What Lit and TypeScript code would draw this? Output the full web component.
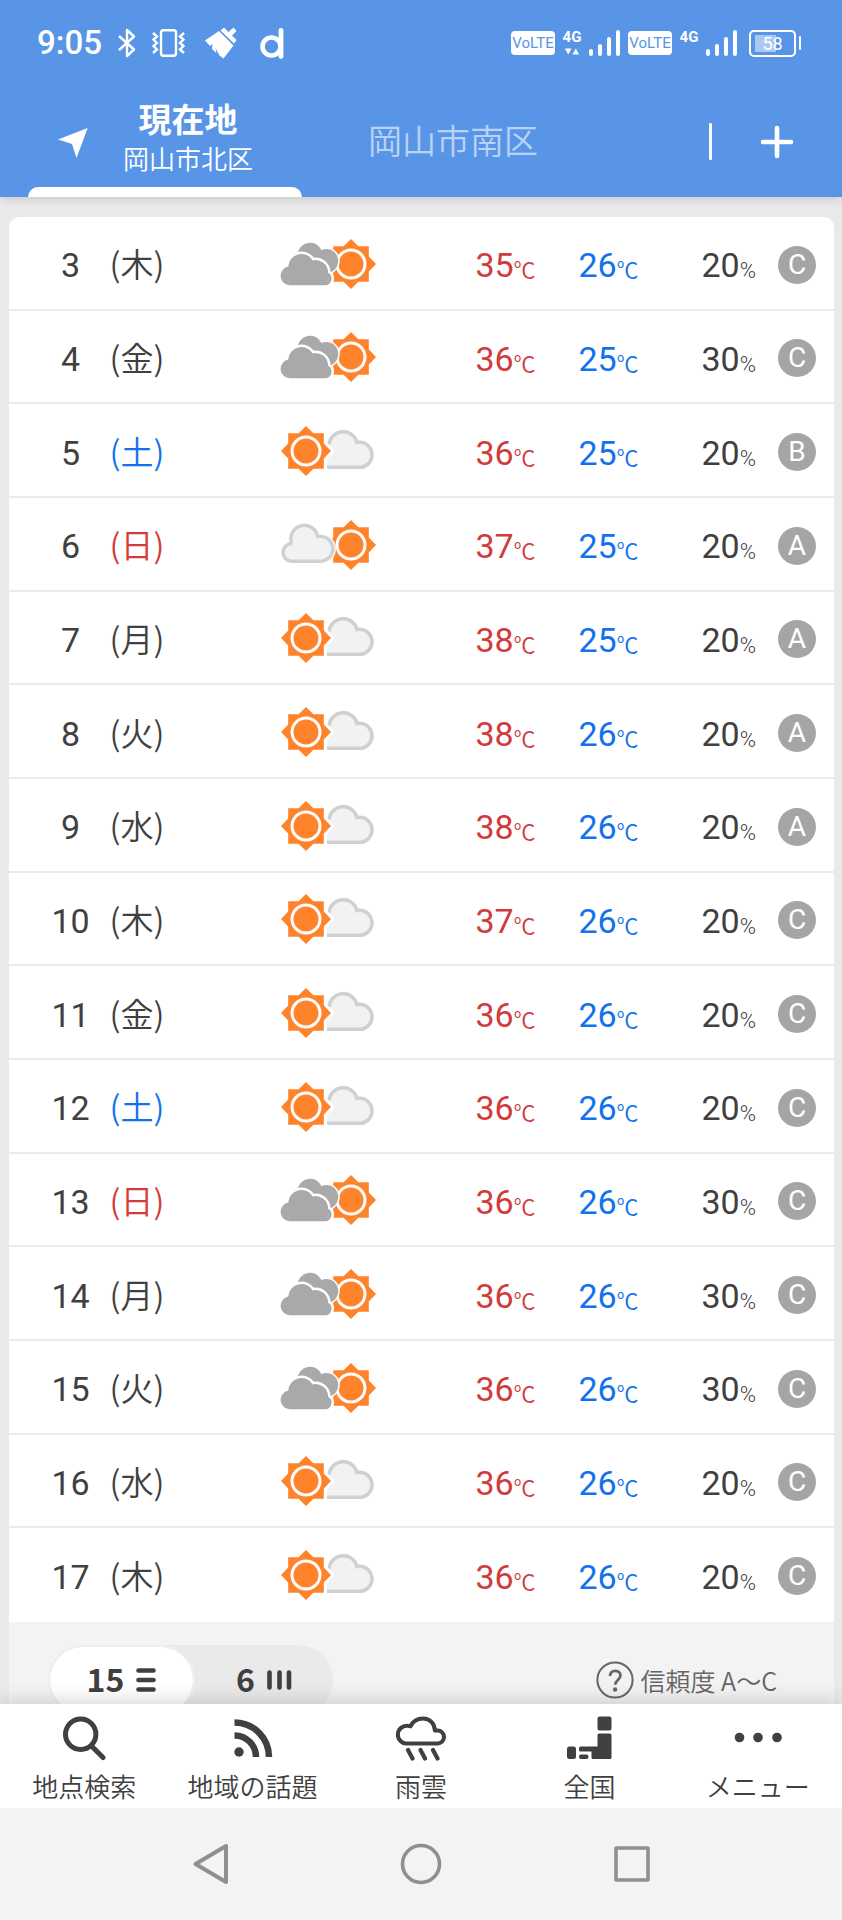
import { LitElement, html, css, svg, nothing } from "lit";
import { customElement, property, state } from "lit/decorators.js";

type Sky = "cloud-sun" | "sun-cloud" | "haze-sun";
type Day = [number, string, Sky, number, number, number, string];

const DAYS: Day[] = [
  [3, "木", "cloud-sun", 35, 26, 20, "C"],
  [4, "金", "cloud-sun", 36, 25, 30, "C"],
  [5, "土", "sun-cloud", 36, 25, 20, "B"],
  [6, "日", "haze-sun", 37, 25, 20, "A"],
  [7, "月", "sun-cloud", 38, 25, 20, "A"],
  [8, "火", "sun-cloud", 38, 26, 20, "A"],
  [9, "水", "sun-cloud", 38, 26, 20, "A"],
  [10, "木", "sun-cloud", 37, 26, 20, "C"],
  [11, "金", "sun-cloud", 36, 26, 20, "C"],
  [12, "土", "sun-cloud", 36, 26, 20, "C"],
  [13, "日", "cloud-sun", 36, 26, 30, "C"],
  [14, "月", "cloud-sun", 36, 26, 30, "C"],
  [15, "火", "cloud-sun", 36, 26, 30, "C"],
  [16, "水", "sun-cloud", 36, 26, 20, "C"],
  [17, "木", "sun-cloud", 36, 26, 20, "C"],
];

const SKY_NAMES: Record<Sky, string> = {
  "cloud-sun": "曇のち晴",
  "sun-cloud": "晴時々曇",
  "haze-sun": "薄曇のち晴",
};

@customElement("weather-icon")
export class WeatherIcon extends LitElement {
  @property() sky: Sky = "sun-cloud";

  static styles = css`
    :host { display: inline-block; }
    svg { display: block; }
    .halo { fill: #fff; stroke: #fff; stroke-width: 6; stroke-linejoin: round; }
    .sun { fill: #ff832b; }
    .ring { fill: none; stroke: #fff; stroke-width: 3; }
    .cloud { fill: #f2f2f2; stroke: #d0d0d0; stroke-width: 3.4; stroke-linejoin: round; }
    .grey { fill: #a9a9a9; }
    .edge { fill: #fff; stroke: #fff; stroke-width: 5; }
    .rim { fill: none; stroke: #fff; stroke-width: 6; }
  `;

  private sun(x: number, halo: boolean) {
    const shape = "M0-25 7.4-17.8H17.8V-7.4L25 0 17.8 7.4V17.8H7.4L0 25-7.4 17.8H-17.8V7.4L-25 0-17.8-7.4V-17.8H-7.4Z";
    return svg`<g transform="translate(${x} 25)">
      ${halo ? svg`<path class="halo" d=${shape}/>` : nothing}
      <path class="sun" d=${shape}/>
      <circle class="ring" r="14"/>
    </g>`;
  }

  render() {
    const front = "M10 46.3a9.5 9.5 0 0 1-1.8-18.8 13.3 13.3 0 0 1 24.6-6.1 12.5 12.5 0 0 1 15.3 12.4 6.7 6.7 0 0 1-3 12.5Z";
    const back = "M17.5 16a12.6 12.6 0 0 1 24-5A11.5 11.5 0 0 1 51 33H30Z";
    const haze = "M11 41.2H40.5a12.4 12.4 0 0 0 0-24.8q-1.5 0-2.8.3A13.5 13.5 0 0 0 11 21v2.5A8.9 8.9 0 0 0 11 41.2Z";
    return html`<svg width="96" height="50" viewBox="0 0 96 50" role="img" aria-label=${SKY_NAMES[this.sky]}>
      ${this.sky === "sun-cloud"
        ? svg`<path d="M47 41.3H79.5a12.5 12.5 0 0 0 0-25q-1.2 0-2.5.3A14.2 14.2 0 0 0 49.8 17.5L47 24Z" fill="#f2f2f2"/>
            <path d="M47 41.3H79.5a12.5 12.5 0 0 0 0-25q-1.2 0-2.5.3A14.2 14.2 0 0 0 49 19" fill="none" stroke="#d0d0d0" stroke-width="3.6"/>
            ${this.sun(26, true)}`
        : nothing}
      ${this.sky === "haze-sun"
        ? svg`${this.sun(71, false)}<path class="rim" d=${haze}/><path class="cloud" d=${haze}/>`
        : nothing}
      ${this.sky === "cloud-sun"
        ? svg`${this.sun(71, false)}
            <path d=${back} fill="#fff" stroke="#fff" stroke-width="3"/>
            <path class="grey" d=${back}/>
            <path class="edge" d=${front}/><path class="grey" d=${front}/>`
        : nothing}
    </svg>`;
  }
}

@customElement("status-bar")
export class StatusBar extends LitElement {
  static styles = css`
    :host {
      display: flex; align-items: center; justify-content: space-between;
      height: 86px; padding: 0 41px 0 37px; color: #fff;
      font-family: Roboto, "Noto Sans CJK JP", sans-serif;
    }
    svg { display: block; flex: none; }
    .side { display: flex; align-items: center; }
    .time { font-size: 33px; line-height: 40px; font-weight: 500; margin-right: 16px; }
    .notices { display: flex; align-items: center; gap: 16px; }
    .apps { display: flex; align-items: center; gap: 23px; margin-left: 4px; }
    .volte {
      width: 44px; height: 24px; border-radius: 4px; background: #fff; color: #5995e6;
      font-size: 15px; line-height: 25px; text-align: center;
    }
    .net {
      display: flex; flex-direction: column; align-items: center; gap: 3px;
      width: 18px; height: 26px; margin: 0 8px;
      font-size: 15px; line-height: 15px; font-weight: 700;
    }
    .bars { margin-right: 7px; }
    .battery {
      box-sizing: border-box; width: 47px; height: 27px; margin-left: 4px;
      border: 2px solid #fff; border-radius: 5px;
      font-size: 18px; line-height: 23px; text-align: center;
      background: linear-gradient(#a9c9f3, #a9c9f3) 4px 3px / 21px 17px no-repeat;
    }
    .nub { width: 2px; height: 14px; margin-left: 3px; background: #fff; border-radius: 1px; }
  `;

  private bars() {
    return html`<svg class="bars" width="32" height="26" viewBox="0 0 32 26" stroke="#fff" stroke-width="4" stroke-linecap="round">
      <path d="M2 21v3M11 16v8M20 9v15M29 2v22"/></svg>`;
  }

  render() {
    return html`
      <div class="side">
        <span class="time">9:05</span>
        <div class="notices">
          <svg width="18" height="30" viewBox="0 0 18 30" fill="none" stroke="#fff" stroke-width="2.4" stroke-linejoin="round">
            <path d="M1 8 16 21.5 9 28V2l7 6.5L1 22"/></svg>
          <svg width="33" height="28" viewBox="0 0 33 28" fill="none" stroke="#fff" stroke-width="2.4">
            <rect x="9" y="1.2" width="15" height="25.5" rx="2.5"/>
            <path d="m1 4 4 3.500-3.500 3 3.500 3.500-3.500 3L5 20.500 1 24M32 4l-4 3.500 3.500 3L28 14l3.500 3-3.500 3.500 4 3.500"/></svg>
          <div class="apps">
            <svg width="32" height="32" viewBox="0 0 32 32" fill="#fff">
              <path d="M15.500 3.500 19 .5 23.500 5 28.500.5 31.500 4 27 8.500 31.500 13 29 16.500Z"/>
              <path d="M14 4 28.500 18.500 18.500 31.500 14.500 28.500 10.500 21l1 5-4.500-4 .5-5-2.500 2L0 13.500Z"/></svg>
            <svg width="24" height="31" viewBox="0 0 24 31" fill="none" stroke="#fff">
              <circle cx="11.500" cy="18.500" r="9" stroke-width="4.600"/>
              <path d="M21 2.500V28.500" stroke-width="4.800" stroke-linecap="round"/></svg>
          </div>
        </div>
      </div>
      <div class="side">
        <span class="volte">VoLTE</span>
        <span class="net">4G<svg width="14" height="7" viewBox="0 0 14 7" fill="#fff"><path d="M0 .5h6.500L3.200 6.500ZM7.500 6.500H14L10.800.5Z"/></svg></span>
        ${this.bars()}
        <span class="volte">VoLTE</span>
        <span class="net">4G</span>
        ${this.bars()}
        <span class="battery">58</span><span class="nub"></span>
      </div>`;
  }
}

@customElement("app-root")
export class AppRoot extends LitElement {
  @state() private rows = 15;
  @state() private place = 0;

  static styles = css`
    :host {
      display: flex; flex-direction: column; height: 100vh; min-width: 0;
      background: #eaeaea; color: #404040;
      font-family: Roboto, "Noto Sans CJK JP", sans-serif;
    }
    button {
      margin: 0; padding: 0; border: 0; background: none; color: inherit;
      font: inherit; cursor: pointer;
    }
    svg { display: block; flex: none; }

    .header { flex: none; background: #5995e6; color: #fff; box-shadow: 0 1px 10px rgba(0, 0, 0, .18); }
    .tabs { display: flex; height: 111px; padding: 0 46px 0 28px; }
    .places { display: flex; flex: 1; gap: 14px; }
    .place {
      display: grid; align-content: center; justify-items: center; width: 274px;
      font-size: 34px; line-height: 40px; font-weight: 350; color: #b9d3f6;
    }
    .here {
      grid-template-columns: 30px 1fr 14px; gap: 0 15px; padding-left: 30px; box-sizing: border-box;
      color: #fff; grid-template-rows: 1fr 10px; align-content: stretch;
    }
    .here svg { align-self: center; padding-top: 12px; }
    .names { display: flex; flex-direction: column; align-items: center; justify-content: center; padding-top: 5px; }
    .name { font-size: 33px; line-height: 42px; font-weight: 700; }
    .ward { font-size: 26px; line-height: 36px; font-weight: 350; }
    .mark { grid-column: 1 / -1; justify-self: stretch; margin-left: -30px; background: #fff; border-radius: 10px 10px 0 0; }
    .tools { display: flex; align-items: center; gap: 46px; }
    .rule { width: 3px; height: 37px; background: #fff; border-radius: 1px; }

    .main { flex: 1; min-height: 0; display: flex; flex-direction: column; padding: 20px 8px 0 9px; overflow: hidden; }
    .forecast {
      flex: 1; width: 100%; table-layout: fixed; border-collapse: separate; border-spacing: 0;
      background: #fff; border-radius: 10px 10px 0 0;
      font-size: 34px; line-height: 40px; text-align: center; white-space: nowrap;
    }
    .forecast td { padding: 5px 0 0; border-bottom: 2px solid #eaeaea; }
    .forecast tr:last-child td { border-bottom-color: #fff; }
    .c-date { width: 93px; }
    .c-week { width: 70px; }
    .c-temp { width: 103px; }
    .c-rain { width: 100px; }
    .c-rank { width: 74px; }
    .forecast .date { padding-left: 30px; }
    .forecast .week { padding-top: 1px; font-size: 33px; font-weight: 350; font-family: "Noto Sans CJK JP", sans-serif; }
    .forecast .sky { padding: 2px 0 0 30px; }
    .forecast .rain { padding-right: 4px; text-align: right; }
    .forecast .rank { padding: 0; }
    .sky weather-icon { vertical-align: middle; }
    .sat { color: #1271ee; }
    .sun { color: #d13b3b; }
    .high { color: #d13b3b; }
    .low { color: #1271ee; }
    .unit { font-size: 22px; line-height: 22px; font-weight: 350; vertical-align: -1px; }
    .badge {
      display: inline-block; width: 38px; height: 38px; border-radius: 50%; vertical-align: middle;
      background: #a5a5a5; color: #fff; font-size: 28px; line-height: 38px;
    }

    .strip {
      flex: none; display: flex; justify-content: space-between; align-items: flex-start;
      height: 59px; padding: 23px 57px 0 39px; background: #f3f3f3;
    }
    .switch { display: flex; height: 70px; border-radius: 35px; background: #eaeaea; }
    .option {
      display: flex; align-items: center; justify-content: center; gap: 12px;
      width: 138px; height: 70px; border-radius: 35px;
      font-family: "Noto Sans CJK JP", sans-serif; font-size: 32px; font-weight: 700; line-height: 36px;
    }
    .count { padding-bottom: 4px; }
    .option[aria-pressed="true"] { width: 147px; background: #fff; box-shadow: inset 0 0 0 2px #ededed; }
    .help {
      display: flex; align-items: center; gap: 7px; height: 70px; color: #666;
      font-family: "Noto Sans CJK JP", sans-serif; font-size: 25px; line-height: 36px; font-weight: 350;
    }

    .menu {
      flex: none; position: relative; display: grid; grid-template-columns: repeat(5, 1fr);
      height: 104px; background: #fff; box-shadow: 0 -2px 20px rgba(0, 0, 0, .18);
    }
    .entry {
      display: flex; flex-direction: column; align-items: center; gap: 7px; padding-top: 11px;
      font-size: 26px; line-height: 36px; font-weight: 350; color: #404040; text-decoration: none;
      font-family: "Noto Sans CJK JP", sans-serif;
    }
    .system { flex: none; position: relative; display: flex; height: 112px; padding: 0 12.5%; background: #f3f3f3; }
    .key { flex: 1; display: flex; align-items: center; justify-content: center; }
  `;

  private row([date, week, sky, high, low, rain, rank]: Day) {
    const tone = week === "土" ? "sat" : week === "日" ? "sun" : "";
    return html`<tr>
      <td class="date">${date}</td>
      <td class="week ${tone}">(${week})</td>
      <td class="sky"><weather-icon .sky=${sky}></weather-icon></td>
      <td class="high">${high}<span class="unit">℃</span></td>
      <td class="low">${low}<span class="unit">℃</span></td>
      <td class="rain">${rain}<span class="unit">%</span></td>
      <td class="rank"><span class="badge">${rank}</span></td>
    </tr>`;
  }

  private entry(label: string, icon: unknown) {
    return html`<a class="entry" href="#">
      <svg width="52" height="46" viewBox="0 0 52 46" fill="none" stroke="#404040" aria-hidden="true">${icon}</svg>${label}
    </a>`;
  }

  render() {
    return html`
      <header class="header">
        <status-bar></status-bar>
        <div class="tabs">
          <div class="places">
            <button class="place here" @click=${() => (this.place = 0)}>
              <svg width="30" height="30" viewBox="0 0 30 30" fill="#fff"><path d="M29.700 0 18.500 30 14 16 0 11.500Z"/></svg>
              <span class="names"><span class="name">現在地</span><span class="ward">岡山市北区</span></span>
              <span></span>
              <span class="mark"></span>
            </button>
            <button class="place" @click=${() => (this.place = 1)}>岡山市南区</button>
          </div>
          <div class="tools">
            <span class="rule"></span>
            <button aria-label="追加">
              <svg width="38" height="38" viewBox="0 0 38 38" stroke="#fff" stroke-width="4.600" stroke-linecap="round"><path d="M19 5v28M5 19h28"/></svg>
            </button>
          </div>
        </div>
      </header>

      <main class="main">
        <table class="forecast">
          <colgroup>
            <col class="c-date"><col class="c-week"><col><col class="c-temp"><col class="c-temp"><col class="c-rain"><col class="c-rank">
          </colgroup>
          <tbody>${DAYS.map((d) => this.row(d))}</tbody>
        </table>
        <div class="strip">
          <div class="switch">
            <button class="option" aria-pressed=${this.rows === 15} @click=${() => (this.rows = 15)}><span class="count">15</span>
              <svg width="20" height="24" viewBox="0 0 20 24" stroke="#404040" stroke-width="4.600" stroke-linecap="round"><path d="M2.500 2.500h15M2.500 12h15M2.500 21.500h15"/></svg>
            </button>
            <button class="option" aria-pressed=${this.rows === 6} @click=${() => (this.rows = 6)}><span class="count">6</span>
              <svg width="25" height="20" viewBox="0 0 25 20" stroke="#404040" stroke-width="4.600" stroke-linecap="round"><path d="M2.500 2.500v15M12.500 2.500v15M22 2.500v15"/></svg>
            </button>
          </div>
          <button class="help">
            <svg width="38" height="38" viewBox="0 0 38 38" fill="none" stroke="#666">
              <circle cx="19" cy="19" r="17.600" stroke-width="2"/>
              <path d="M14 15c0-3.500 2.500-5.200 5.300-5.200 3 0 5.100 1.900 5.100 4.700 0 4.500-5.200 4.400-5.200 9.300" stroke-width="2.800"/>
              <circle cx="19.100" cy="28.500" r="2.200" fill="#666" stroke="none"/></svg>
            信頼度 A〜C
          </button>
        </div>
      </main>

      <nav class="menu">
        ${this.entry("地点検索", svg`<circle cx="22.700" cy="19.300" r="15.200" stroke-width="5"/><path d="M34 31.500 45 42.500" stroke-width="5" stroke-linecap="round"/>`)}
        ${this.entry("地域の話題", svg`<circle cx="12" cy="37" r="4.700" fill="#404040" stroke="none"/><path d="M7.500 20.500A21.500 21.500 0 0 1 29 42M7.500 7.500A34.500 34.500 0 0 1 42 42" stroke-width="6.500"/>`)}
        ${this.entry("雨雲", svg`<path d="M11 28.500a8.800 8.800 0 0 1 1.500-17.700c1.200 0 2 .1 3 .5C18 6 23 3.500 28 3.500c7 0 11.500 5 12 12h2.500a6.500 6.500 0 0 1 0 13Z" stroke-width="4" stroke-linejoin="round"/><path d="m13 35 4.500 8.500M25.500 35 30 43.500M38 35l4.500 8.500" stroke-width="4.200" stroke-linecap="round"/>`)}
        ${this.entry("全国", svg`<g fill="#404040" stroke="none"><rect x="34.500" y="1.500" width="14" height="14" rx="2"/><path d="M36 18.500h11a1.500 1.500 0 0 1 1.500 1.500v22.500a1.500 1.500 0 0 1-1.500 1.500H30a1.500 1.500 0 0 1-1.500-1.500V36.500H17.500a1.500 1.500 0 0 1-1.500-1.500V33a1.500 1.500 0 0 1 1.500-1.500h17V20a1.500 1.500 0 0 1 1.500-1.500Z"/><rect x="4" y="31.500" width="9" height="12.500" rx="2.500"/><rect x="16" y="39.500" width="9.500" height="4.500" rx="2"/></g>`)}
        ${this.entry("メニュー", svg`<g fill="#404040" stroke="none"><circle cx="7.500" cy="22.500" r="4.800"/><circle cx="26" cy="22.500" r="4.800"/><circle cx="45" cy="22.500" r="4.800"/></g>`)}
      </nav>

      <div class="system">
        <button class="key" aria-label="戻る"><svg width="42" height="42" viewBox="0 0 42 42" fill="none" stroke="#8f8f8f" stroke-width="4" stroke-linejoin="round"><path d="M5.500 21 36 3V39Z"/></svg></button>
        <button class="key" aria-label="ホーム"><svg width="42" height="42" viewBox="0 0 42 42" fill="none" stroke="#8f8f8f" stroke-width="3.600"><circle cx="21" cy="21" r="18.500"/></svg></button>
        <button class="key" aria-label="履歴"><svg width="42" height="42" viewBox="0 0 42 42" fill="none" stroke="#8f8f8f" stroke-width="3.600" stroke-linejoin="round"><path d="M5 5h32v32H5Z"/></svg></button>
      </div>`;
  }
}
